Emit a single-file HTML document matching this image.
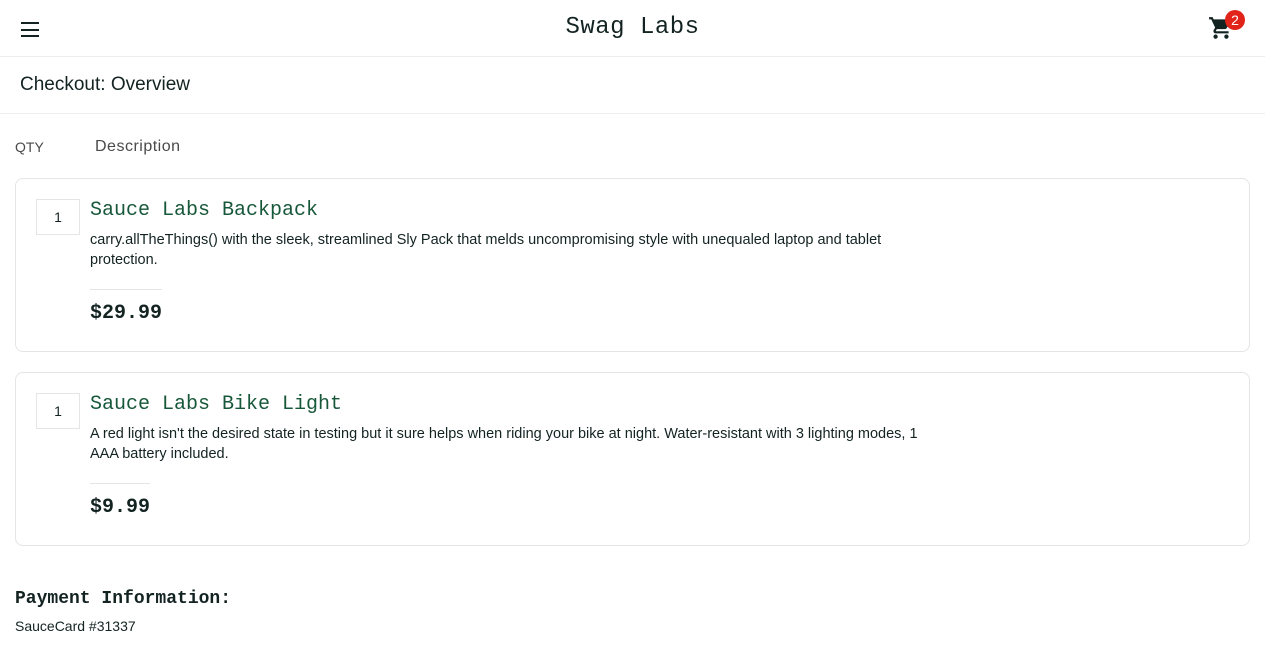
<!DOCTYPE html>
<html><head><meta charset="utf-8"><style>
*{box-sizing:border-box;margin:0;padding:0}
body{width:1280px;height:659px;overflow:hidden;background:#fff;font-family:"Liberation Sans",sans-serif;color:#132322}
.page{width:1265px;position:relative;height:659px}
.hdr{height:57px;border-bottom:1px solid #ededed;position:relative}
.burger{position:absolute;left:21px;top:22px;width:18px}
.burger div{height:2px;background:#132322;margin-bottom:4.5px}
.logo{position:absolute;left:0;right:0;top:14px;text-align:center;font-family:"Liberation Mono",monospace;font-size:24px;letter-spacing:0.5px}
.cart{position:absolute;left:1208px;top:15px}
.badge{position:absolute;left:1225px;top:10px;width:20px;height:20px;border-radius:50%;background:#e2231a;color:#fff;font-size:14px;text-align:center;line-height:20px}
.sub{height:57px;border-bottom:1px solid #ededed;padding-left:20px;font-size:19px;line-height:56px}
.lbl{position:absolute;top:138px;color:#4a4a4a}
.item{position:absolute;left:15px;width:1235px;height:174px;border:1px solid #e5e5e5;border-radius:8px}
.qty{position:absolute;left:20px;top:20px;width:44px;height:36px;border:1px solid #e5e5e5;text-align:center;line-height:34px;font-size:14px}
.name{position:absolute;left:74px;top:20px;font-family:"Liberation Mono",monospace;font-size:20px;color:#18583a}
.desc{position:absolute;left:74px;top:51px;font-size:14.5px;line-height:20px}
.price{position:absolute;left:74px;top:110px;border-top:1px solid #e5e5e5;padding-top:12px;font-family:"Liberation Mono",monospace;font-size:20px;font-weight:bold}
</style></head><body><div class="page">
<div class="hdr">
<div class="burger"><div></div><div></div><div></div></div>
<div class="logo">Swag Labs</div>
<svg class="cart" width="26" height="26" viewBox="0 0 24 24"><path fill="#132322" d="M7 18c-1.1 0-2 .9-2 2s.9 2 2 2 2-.9 2-2-.9-2-2-2zM1 2v2h2l3.6 7.6-1.4 2.4c-.1.3-.2.6-.2 1 0 1.1.9 2 2 2h12v-2H7.4c-.1 0-.2-.1-.2-.2l.9-1.8h7.5c.8 0 1.4-.4 1.7-1l3.6-6.5c.1-.2.1-.3.1-.5 0-.6-.4-1-1-1H5.2l-.9-2H1zm16 16c-1.1 0-2 .9-2 2s.9 2 2 2 2-.9 2-2-.9-2-2-2z"/></svg>
<div class="badge">2</div>
</div>
<div class="sub">Checkout: Overview</div>
<div class="lbl" style="left:15px;font-size:14px;top:139px">QTY</div>
<div class="lbl" style="left:95px;font-size:16px;letter-spacing:0.5px">Description</div>
<div class="item" style="top:178px">
<div class="qty">1</div>
<div class="name">Sauce Labs Backpack</div>
<div class="desc">carry.allTheThings() with the sleek, streamlined Sly Pack that melds uncompromising style with unequaled laptop and tablet<br>protection.</div>
<div class="price" style="width:72px">$29.99</div>
</div>
<div class="item" style="top:372px">
<div class="qty">1</div>
<div class="name">Sauce Labs Bike Light</div>
<div class="desc">A red light isn't the desired state in testing but it sure helps when riding your bike at night. Water-resistant with 3 lighting modes, 1<br>AAA battery included.</div>
<div class="price" style="width:60px">$9.99</div>
</div>
<div style="position:absolute;left:15px;top:589px;font-family:'Liberation Mono',monospace;font-size:18px;font-weight:bold">Payment Information:</div>
<div style="position:absolute;left:15px;top:618px;font-size:14px">SauceCard #31337</div>
</div></body></html>
